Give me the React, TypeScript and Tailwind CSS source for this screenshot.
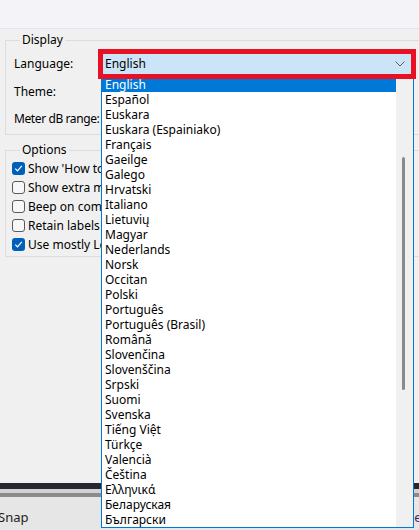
import React from 'react';

const languages = [
  'English',
  'Español',
  'Euskara',
  'Euskara (Espainiako)',
  'Français',
  'Gaeilge',
  'Galego',
  'Hrvatski',
  'Italiano',
  'Lietuvių',
  'Magyar',
  'Nederlands',
  'Norsk',
  'Occitan',
  'Polski',
  'Português',
  'Português (Brasil)',
  'Română',
  'Slovenčina',
  'Slovenščina',
  'Srpski',
  'Suomi',
  'Svenska',
  'Tiếng Việt',
  'Türkçe',
  'Valencià',
  'Čeština',
  'Ελληνικά',
  'Беларуская',
  'Български',
];

const options = [
  { label: "Show 'How to Get Help' at launch", checked: true },
  { label: 'Show extra menus', checked: false },
  { label: 'Beep on completion of longer activities', checked: false },
  { label: 'Retain labels if selection snaps to a label', checked: false },
  { label: 'Use mostly Left-to-Right layouts in RTL languages', checked: true },
];

const Checkbox: React.FC<{ checked: boolean }> = ({ checked }) =>
  checked ? (
    <span className="flex h-[13px] w-[13px] shrink-0 items-center justify-center rounded-[3px] bg-[#005fb8]">
      <svg width="9" height="9" viewBox="0 0 9 9" fill="none">
        <path d="M1.2 4.6 L3.5 6.8 L7.8 1.9" stroke="white" strokeWidth="1.2" />
      </svg>
    </span>
  ) : (
    <span className="h-[13px] w-[13px] shrink-0 rounded-[3px] border border-[#5a5a5a] bg-[#f7f7f7]" />
  );

// popup list of the Language combobox, drawn over the rest of the dialog
const LanguageList: React.FC = () => (
  <div className="absolute left-[101px] top-[77px] z-10 flex h-[451px] w-[313px] border-x border-b border-[#0078d7] bg-white">
    <ul className="flex-1">
      {languages.map((lang, i) => (
        <li
          key={lang}
          className={`h-[15px] pl-[3px] leading-[15px] whitespace-nowrap ${
            i === 0 ? 'bg-[#0078d7] text-white' : 'text-black'
          }`}
        >
          {lang}
        </li>
      ))}
    </ul>
    <div className="relative w-[17px] bg-[#f0f0f0]">
      <div className="absolute left-[6px] top-[80px] h-[233px] w-[3px] rounded-full bg-[#8a8a8a]" />
    </div>
  </div>
);

export default function App() {
  return (
    <div className="relative flex h-[530px] w-[419px] flex-col overflow-hidden bg-[#f0f0f0] font-['Noto_Sans',sans-serif] text-[12px] text-black">
      <div className="h-[29px] shrink-0 border-b border-[#e4e4e8] bg-[#f4f4f8]" />

      <div className="flex flex-col gap-[7px] pl-[5px] pt-[3px]">
        <fieldset className="w-[440px] border border-[#dcdcdc] pb-[6px] pl-[8px] pt-[1px]">
          <legend className="ml-[6px] px-[2px] leading-[16px]">Display</legend>
          <div className="grid grid-cols-[84px_1fr]">
            <span className="flex h-[30px] items-center whitespace-nowrap">Language:</span>
            <div className="relative z-20 flex h-[30px] w-[318px] items-center justify-between border-[5px] border-[#e81123] bg-[#cce4f7] pl-[2px] pr-[6px]">
              <span>English</span>
              <svg width="10" height="6" viewBox="0 0 10 6" fill="none">
                <path d="M0.5 0.5 L5 5 L9.5 0.5" stroke="#5f5f5f" strokeWidth="1" />
              </svg>
            </div>
            <span className="flex h-[22px] items-center whitespace-nowrap pt-[4px]">Theme:</span>
            <span />
            <span className="flex h-[27px] items-center whitespace-nowrap pt-[8px] tracking-[-0.4px]">
              Meter dB range:
            </span>
            <span />
          </div>
        </fieldset>

        <fieldset className="w-[440px] border border-[#dcdcdc] pb-[2px] pl-[6px] pt-[1px]">
          <legend className="ml-[8px] px-[2px] leading-[16px]">Options</legend>
          <div className="flex flex-col">
            {options.map((opt) => (
              <label key={opt.label} className="flex h-[19px] items-center gap-[3px]">
                <Checkbox checked={opt.checked} />
                <span className="w-[73px] overflow-hidden whitespace-nowrap">{opt.label}</span>
              </label>
            ))}
          </div>
        </fieldset>
      </div>

      <div className="flex-1" />

      <div className="flex h-[47px] shrink-0 flex-col">
        <div className="h-[6px] bg-[#26262e]" />
        <div className="h-[4px] bg-[#d2d2d2]" />
        <div className="h-[4px] bg-[#8c8c8c]" />
        <div className="flex flex-1 items-center justify-between bg-[#e6e6e6] pt-[8px]">
          <span className="-ml-[2px] text-[13px] text-[#222]">Snap</span>
          <span className="mr-[-6px] text-[13px] text-[#3a1f6e]">el</span>
        </div>
      </div>

      <LanguageList />
    </div>
  );
}
